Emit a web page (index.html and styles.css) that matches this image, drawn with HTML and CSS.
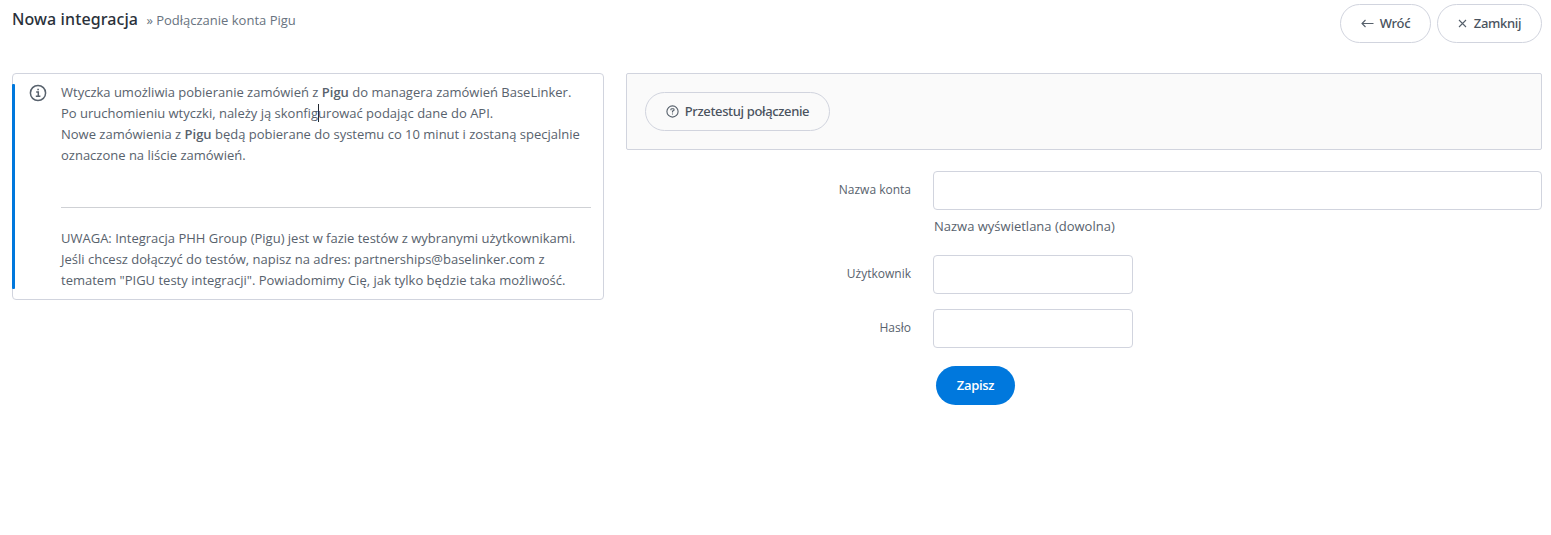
FILE: index.html
```html
<!DOCTYPE html>
<html lang="pl">
<head>
  <meta charset="UTF-8">
  <meta name="viewport" content="width=device-width, initial-scale=1.0">
  <title>Nowa integracja - Pigu</title>
  <link rel="stylesheet" href="styles.css">
</head>
<body>
  <header class="page-header">
    <h1>Nowa integracja <small>» Podłączanie konta Pigu</small></h1>
    <div class="header-actions">
      <button class="btn btn-back" type="button">
        <svg class="icon-back" width="13" height="9" viewBox="0 0 13 9" fill="none" stroke="currentColor" stroke-width="1.1"><path d="M12.5 4.5H1M4.5 1 1 4.5 4.5 8"/></svg>
        Wróć
      </button>
      <button class="btn btn-close" type="button">
        <svg class="icon-close" width="9" height="9" viewBox="0 0 9 9" fill="none" stroke="currentColor" stroke-width="1.1"><path d="M1 1l7 7M8 1L1 8"/></svg>
        Zamknij
      </button>
    </div>
  </header>

  <main class="content">
    <section class="info-box">
      <svg class="icon-info" width="18" height="18" viewBox="0 0 18 18" fill="none" stroke="currentColor" stroke-width="1.5"><circle cx="9" cy="9" r="7.6"/><path d="M7.2 8H9.3V12.3M6.8 12.3H11.4M8.3 5.5H9.9"/></svg>
      <div class="info-text">
        <p>
          Wtyczka umożliwia pobieranie zamówień z <b>Pigu</b> do managera zamówień BaseLinker.<br>
          Po uruchomieniu wtyczki, należy ją skonfig<span class="caret"></span>urować podając dane do API.<br>
          Nowe zamówienia z <b>Pigu</b> będą pobierane do systemu co 10 minut i zostaną specjalnie<br>
          oznaczone na liście zamówień.
        </p>
        <hr>
        <p>
          UWAGA: Integracja PHH Group (Pigu) jest w fazie testów z wybranymi użytkownikami.<br>
          Jeśli chcesz dołączyć do testów, napisz na adres: partnerships@baselinker.com z<br>
          tematem "PIGU testy integracji". Powiadomimy Cię, jak tylko będzie taka możliwość.
        </p>
      </div>
    </section>

    <section class="settings">
      <div class="toolbar">
        <button class="btn btn-test" type="button">
          <svg class="icon-help" width="13" height="13" viewBox="0 0 13 13" fill="none" stroke="currentColor" stroke-width="1.1"><circle cx="6.5" cy="6.5" r="5.6"/><path d="M4.9 5.3V4.6Q4.9 3.8 5.8 3.8H7.2Q8.1 3.8 8.1 4.7 8.1 5.5 7.3 5.8L6.5 6.2V7.5M6.5 8.4V9.6"/></svg>
          Przetestuj połączenie
        </button>
      </div>

      <form class="form">
        <label for="name">Nazwa konta</label>
        <div class="field">
          <input id="name" type="text">
          <span class="help">Nazwa wyświetlana (dowolna)</span>
        </div>
        <label for="user">Użytkownik</label>
        <div class="field">
          <input class="short" id="user" type="text">
        </div>
        <label for="password">Hasło</label>
        <div class="field">
          <input class="short" id="password" type="password">
        </div>
        <button class="btn btn-primary" type="button">Zapisz</button>
      </form>
    </section>
  </main>
</body>
</html>
```
FILE: styles.css
```css
* {
  margin: 0;
  padding: 0;
  box-sizing: border-box;
}

body {
  font-family: 'Open Sans', 'Noto Sans', sans-serif;
  font-size: 13px;
  line-height: 21px;
  color: #58626d;
  background: #fff;
  padding: 4px 9px 0 12px;
}

.page-header {
  display: flex;
  justify-content: space-between;
  height: 69px;
}

h1 {
  font-family: 'Noto Sans', 'Open Sans', sans-serif;
  font-size: 16px;
  font-weight: 500;
  line-height: 30px;
  letter-spacing: 0.1px;
  color: #2a313a;
}

h1 small {
  font-family: 'Open Sans', 'Noto Sans', sans-serif;
  font-size: 13px;
  font-weight: 400;
  letter-spacing: 0;
  color: #687380;
  margin-left: 4px;
}

.header-actions {
  display: flex;
  align-items: flex-start;
  gap: 6px;
}

.btn {
  display: flex;
  align-items: center;
  justify-content: center;
  height: 39px;
  padding-bottom: 2px;
  font-family: 'Noto Sans', 'Open Sans', sans-serif;
  font-size: 13px;
  font-weight: 500;
  letter-spacing: -0.3px;
  color: #4a535e;
  background: transparent;
  border: 1px solid #d1d4de;
  border-radius: 20px;
  white-space: nowrap;
  cursor: pointer;
}

.btn svg {
  flex: none;
  margin-top: 1px;
  color: #56606b;
}

.btn-back {
  width: 91px;
  gap: 6px;
}

.btn-close {
  width: 105px;
  gap: 7px;
}

.btn-test {
  width: 185px;
  gap: 6px;
  letter-spacing: -0.36px;
}

.content {
  display: flex;
  align-items: flex-start;
  gap: 22px;
}

.info-box {
  position: relative;
  display: flex;
  flex: none;
  gap: 14px;
  width: 592px;
  height: 227px;
  padding: 8px 12px 8px 16px;
  border: 1px solid #d1d4de;
  border-radius: 4px;
}

/* blue accent over the left border */
.info-box::before {
  content: "";
  position: absolute;
  left: -1px;
  top: 10px;
  bottom: 10px;
  width: 3px;
  background: #0078dd;
  border-radius: 1px;
}

.icon-info {
  flex: none;
  margin-top: 2px;
}

.info-text {
  flex: 1;
  white-space: nowrap;
}

.info-text b {
  font-weight: 600;
}

.info-text hr {
  border: 0;
  border-top: 1px solid #cfd1d5;
  margin: 41px 0 20px;
}

.caret {
  display: inline-block;
  width: 1px;
  height: 18px;
  margin-right: -1px;
  vertical-align: -4px;
  line-height: 0;
  background: #212830;
}

.settings {
  flex: 1;
}

.toolbar {
  height: 77px;
  padding: 18px;
  background: #fafafa;
  border: 1px solid #d1d4de;
  border-radius: 2px;
}

.form {
  display: grid;
  grid-template-columns: 285px 1fr;
  column-gap: 22px;
  row-gap: 15px;
  margin-top: 21px;
}

.form label {
  font-size: 12px;
  line-height: 38px;
  text-align: right;
}

.field input {
  display: block;
  width: 100%;
  height: 39px;
  padding: 0 10px;
  font: inherit;
  color: inherit;
  background: #fff;
  border: 1px solid #d1d4de;
  border-radius: 4px;
}

.field input.short {
  width: 200px;
}

.help {
  display: block;
  margin: 6px 0 3px 1px;
}

.btn-primary {
  grid-column: 2;
  width: 79px;
  margin: 3px 0 0 3px;
  font-family: 'Open Sans', 'Noto Sans', sans-serif;
  font-weight: 600;
  color: #fff;
  background: #0078dd;
  border: 0;
}
```
